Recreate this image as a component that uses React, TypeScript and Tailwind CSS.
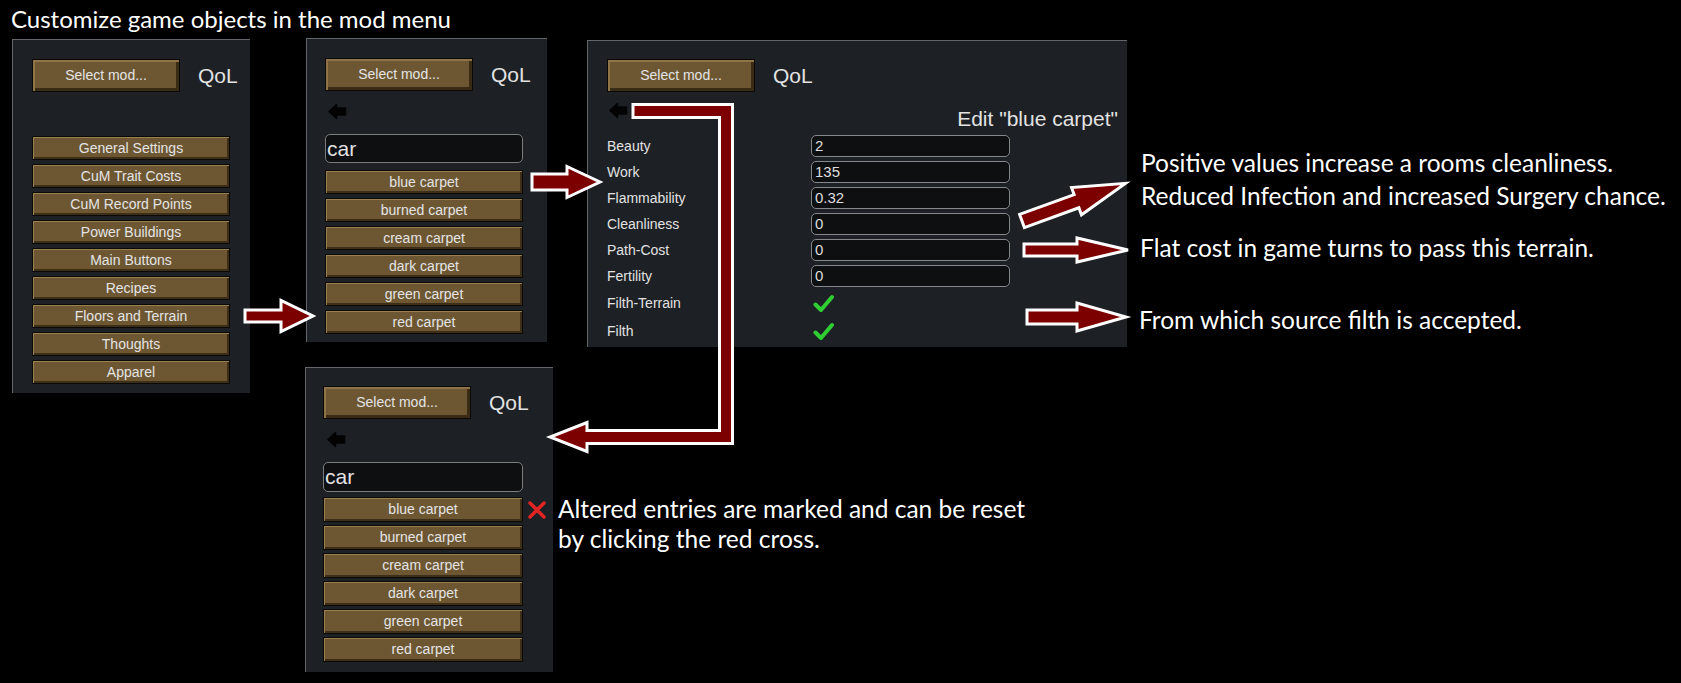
const arial = "font-['Liberation_Sans',Arial,sans-serif]";
const note = "font-['Lato','Open_Sans',sans-serif] text-white text-[24.5px] leading-[30px]";

const btn =
  "flex items-center justify-center bg-[#6d5733] border border-[#0b0904] text-[14px] text-[#e4e4e4] shadow-[inset_1px_1px_0_#9b804f,inset_-2px_-2px_0_#3d2e17]";

function SelectMod() {
  return (
    <div className={`${btn} w-[148px] h-[33px] shrink-0 shadow-[inset_2px_2px_0_#8e7448,inset_-3px_-3px_0_#3a2b15]`}>
      Select mod...
    </div>
  );
}

function Header() {
  return (
    <div className="flex items-center">
      <SelectMod />
      <span className="ml-[18px] text-[21px] text-[#e2e2e2]">QoL</span>
    </div>
  );
}

function BackArrow() {
  return (
    <svg width="19" height="17" viewBox="0 0 19 17" className="shrink-0">
      <path
        d="M1 8.5 L8.5 1.5 L8.5 5 L17.5 5 L17.5 12 L8.5 12 L8.5 15.5 Z"
        fill="#030303"
        stroke="#030303"
        strokeWidth="1.5"
        strokeLinejoin="round"
      />
    </svg>
  );
}

function Check() {
  return (
    <svg width="21" height="19" viewBox="0 0 21 19">
      <path d="M2.5 10.5 L8 16 L19 3" fill="none" stroke="#2fcf33" strokeWidth="4" strokeLinecap="round" strokeLinejoin="round" />
    </svg>
  );
}

function RedCross() {
  return (
    <svg width="20" height="20" viewBox="0 0 20 20" className="shrink-0">
      <path d="M3 3 L17 17 M17 3 L3 17" stroke="#e22424" strokeWidth="3.5" strokeLinecap="round" />
    </svg>
  );
}

const menu = [
  'General Settings',
  'CuM Trait Costs',
  'CuM Record Points',
  'Power Buildings',
  'Main Buttons',
  'Recipes',
  'Floors and Terrain',
  'Thoughts',
  'Apparel',
];

const carpets = ['blue carpet', 'burned carpet', 'cream carpet', 'dark carpet', 'green carpet', 'red carpet'];

const fields = [
  { label: 'Beauty', value: '2' },
  { label: 'Work', value: '135' },
  { label: 'Flammability', value: '0.32' },
  { label: 'Cleanliness', value: '0' },
  { label: 'Path-Cost', value: '0' },
  { label: 'Fertility', value: '0' },
];

const panel = `absolute bg-[#1d2024] border-t border-l border-[#62666b] ${arial}`;

function arrowPoints(x0: number, x1: number, x2: number, yc: number, hs: number, hh: number) {
  return [
    [x0, yc - hs],
    [x1, yc - hs],
    [x1, yc - hh],
    [x2, yc],
    [x1, yc + hh],
    [x1, yc + hs],
    [x0, yc + hs],
  ]
    .map((p) => p.join(','))
    .join(' ');
}

function Arrows() {
  const w = 6.5;
  const hh = 14.5;
  const lShape = [
    [633, 111 - w],
    [726 + w, 111 - w],
    [726 + w, 437 + w],
    [587, 437 + w],
    [587, 437 + hh],
    [550, 437],
    [587, 437 - hh],
    [587, 437 - w],
    [726 - w, 437 - w],
    [726 - w, 111 + w],
    [633, 111 + w],
  ]
    .map((p) => p.join(','))
    .join(' ');

  const style = { fill: '#7d0000', stroke: '#ffffff', strokeWidth: 3, strokeLinejoin: 'miter' as const };

  return (
    <svg className="absolute left-0 top-0 pointer-events-none" width="1681" height="683">
      <polygon points={arrowPoints(245, 281, 313, 316, 6, 15.5)} {...style} />
      <polygon points={arrowPoints(532, 567, 600, 182, 8, 15.5)} {...style} />
      <polygon points={arrowPoints(0, 58, 110, 0, 7, 14.5)} transform="translate(1022 221) rotate(-20)" {...style} />
      <polygon points={arrowPoints(1024, 1077, 1128, 250, 6, 12)} {...style} />
      <polygon points={arrowPoints(1027, 1077, 1126, 317, 7, 14)} {...style} />
      <polygon points={lShape} {...style} />
    </svg>
  );
}

export default function App() {
  return (
    <div className="relative w-[1681px] h-[683px] bg-black overflow-hidden">
      <div className={`${note} absolute left-[11px] top-[4px] text-[24px]`}>Customize game objects in the mod menu</div>

      {/* main category list */}
      <div className={`${panel} left-[12px] top-[39px] w-[238px] h-[354px] pl-[19px] pt-[19px]`}>
        <Header />
        <div className="mt-[44px] flex flex-col gap-[4px]">
          {menu.map((m) => (
            <div key={m} className={`${btn} w-[198px] h-[24px]`}>
              {m}
            </div>
          ))}
        </div>
      </div>

      {/* filtered list */}
      <div className={`${panel} left-[306px] top-[38px] w-[241px] h-[304px] pl-[18px] pt-[19px]`}>
        <Header />
        <div className="mt-[12px] ml-[3px]">
          <BackArrow />
        </div>
        <div className="mt-[14px] w-[198px] h-[29px] rounded-[5px] border border-[#7a7d80] bg-[#0d0f11] flex items-center pl-[1px] text-[21px] text-[#e2e2e2]">
          car
        </div>
        <div className="mt-[7px] flex flex-col gap-[4px]">
          {carpets.map((c) => (
            <div key={c} className={`${btn} w-[198px] h-[24px]`}>
              {c}
            </div>
          ))}
        </div>
      </div>

      {/* edit panel */}
      <div className={`${panel} left-[587px] top-[40px] w-[540px] h-[307px] pl-[19px] pt-[18px] pr-[9px]`}>
        <Header />
        <div className="mt-[10px] flex items-start">
          <div className="ml-[2px]">
            <BackArrow />
          </div>
          <div className="ml-auto mt-[5px] text-[21px] leading-[24px] text-[#e2e2e2]">Edit "blue carpet"</div>
        </div>
        <div className="mt-[2px] flex flex-col">
          {fields.map((f) => (
            <div key={f.label} className="flex items-center h-[26px]">
              <span className="w-[204px] text-[14px] text-[#e2e2e2]">{f.label}</span>
              <div className="w-[199px] h-[22px] rounded-[5px] border border-[#85888b] bg-[#0d0f11] flex items-center pl-[3px] text-[15px] text-[#dedede]">
                {f.value}
              </div>
            </div>
          ))}
          {['Filth-Terrain', 'Filth'].map((l) => (
            <div key={l} className="flex items-center h-[28px]">
              <span className="w-[206px] text-[14px] text-[#e2e2e2]">{l}</span>
              <Check />
            </div>
          ))}
        </div>
      </div>

      {/* filtered list after edit */}
      <div className={`${panel} left-[305px] top-[367px] w-[248px] h-[305px] pl-[17px] pt-[18px]`}>
        <Header />
        <div className="mt-[12px] ml-[4px]">
          <BackArrow />
        </div>
        <div className="mt-[14px] w-[200px] h-[30px] rounded-[5px] border border-[#7a7d80] bg-[#0d0f11] flex items-center pl-[1px] text-[21px] text-[#e2e2e2]">
          car
        </div>
        <div className="mt-[5px] flex flex-col gap-[3px]">
          {carpets.map((c, i) => (
            <div key={c} className="flex items-center">
              <div className={`${btn} w-[200px] h-[25px]`}>{c}</div>
              {i === 0 && (
                <div className="ml-[4px]">
                  <RedCross />
                </div>
              )}
            </div>
          ))}
        </div>
      </div>

      <Arrows />

      <div className={`${note} absolute left-[1141px] top-[146px] leading-[33px]`}>
        <div>Positive values increase a rooms cleanliness.</div>
        <div>Reduced Infection and increased Surgery chance.</div>
      </div>
      <div className={`${note} absolute left-[1140px] top-[233px]`}>Flat cost in game turns to pass this terrain.</div>
      <div className={`${note} absolute left-[1139px] top-[305px]`}>From which source filth is accepted.</div>
      <div className={`${note} absolute left-[558px] top-[494px]`}>
        <div>Altered entries are marked and can be reset</div>
        <div>by clicking the red cross.</div>
      </div>
    </div>
  );
}
